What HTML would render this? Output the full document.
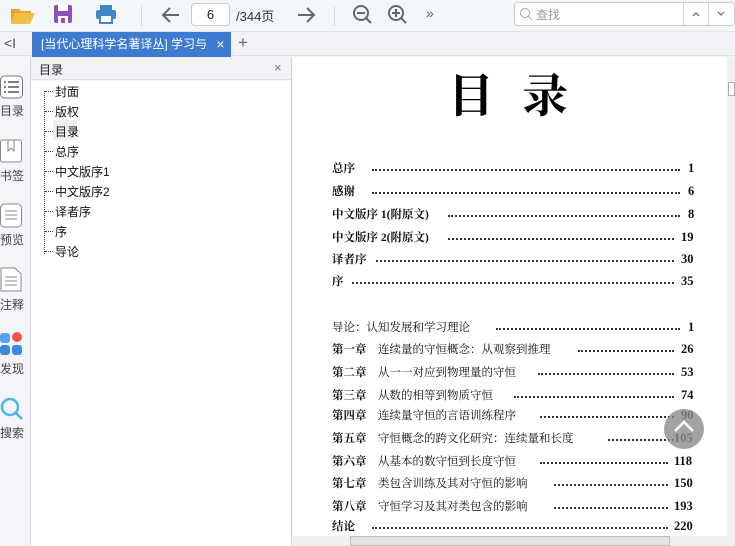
<!DOCTYPE html>
<html><head><meta charset="utf-8"><style>
*{margin:0;padding:0;box-sizing:border-box}
body{width:735px;height:546px;overflow:hidden;background:#f3f5f8;font-family:"Liberation Sans","Noto Sans CJK SC",sans-serif;position:relative;font-size:12px;color:#222}
.a{position:absolute}
.toc{position:absolute;left:332px;font-family:"Liberation Serif","Noto Serif CJK SC",serif;font-size:11.5px;font-weight:bold;color:#111;white-space:nowrap}
.dots{position:absolute;border-bottom:2px dotted #333;height:0}
.pn{position:absolute;font-family:"Liberation Serif",serif;font-weight:bold;font-size:12.5px;color:#111}
.side{position:absolute;left:0;width:31px;text-align:center;font-size:12px;color:#444}
.tree{position:absolute;left:55px;font-size:12px;color:#111}
</style></head><body>
<!-- toolbar -->
<div class="a" style="left:0;top:0;width:735px;height:32px;background:#f4f7fa;border-bottom:1px solid #e0e3e8"></div>
<svg class="a" style="left:10px;top:5px" width="26" height="20"><path d="M1 4h8l2 2h10v3H6L1 18z" fill="#e5a630"/><path d="M5 8h20l-5 11H1z" fill="#f2be46"/></svg>
<svg class="a" style="left:53px;top:4px" width="20" height="20"><rect x="1" y="1" width="18" height="18" rx="2" fill="#8b55b8"/><rect x="5" y="1" width="10" height="6" fill="#fff"/><rect x="5" y="12" width="10" height="7" fill="#fff"/><rect x="8" y="14" width="4" height="5" fill="#8b55b8"/></svg>
<svg class="a" style="left:95px;top:4px" width="22" height="20"><rect x="5" y="1" width="12" height="5" fill="#3f88c5"/><rect x="1" y="6" width="20" height="9" rx="2" fill="#3f88c5"/><rect x="5" y="11" width="12" height="8" fill="#fff" stroke="#3f88c5" stroke-width="2"/></svg>
<div class="a" style="left:141px;top:6px;width:1px;height:20px;background:#d5d8dd"></div>
<svg class="a" style="left:160px;top:5px" width="22" height="20"><path d="M19 10H3M10 3L3 10l7 7" stroke="#666" stroke-width="2" fill="none"/></svg>
<div class="a" style="left:191px;top:3px;width:39px;height:23px;border:1px solid #c8ccd2;border-radius:4px;background:#fff;text-align:center;line-height:21px;font-size:13px">6</div>
<div class="a" style="left:236px;top:6px;font-size:13px;color:#333">/344页</div>
<svg class="a" style="left:295px;top:5px" width="22" height="20"><path d="M3 10h16M12 3l7 7-7 7" stroke="#666" stroke-width="2" fill="none"/></svg>
<div class="a" style="left:334px;top:6px;width:1px;height:20px;background:#d5d8dd"></div>
<svg class="a" style="left:352px;top:4px" width="22" height="22"><circle cx="9" cy="9" r="7" stroke="#666" stroke-width="2" fill="none"/><path d="M5 9h8M14 14l5 5" stroke="#666" stroke-width="2"/></svg>
<svg class="a" style="left:387px;top:4px" width="22" height="22"><circle cx="9" cy="9" r="7" stroke="#666" stroke-width="2" fill="none"/><path d="M5 9h8M9 5v8M14 14l5 5" stroke="#666" stroke-width="2"/></svg>
<div class="a" style="left:426px;top:5px;font-size:14px;color:#666">»</div>
<div class="a" style="left:514px;top:2px;width:221px;height:24px;border:1px solid #c8ccd2;border-radius:4px;background:#fff"></div>
<svg class="a" style="left:519px;top:7px" width="14" height="14"><circle cx="6" cy="6" r="4.5" stroke="#aaa" fill="none"/><path d="M9 9l4 4" stroke="#aaa"/></svg>
<div class="a" style="left:536px;top:6px;font-size:12px;color:#999">查找</div>
<div class="a" style="left:683px;top:3px;width:1px;height:22px;background:#d5d8dd"></div>
<div class="a" style="left:708px;top:3px;width:1px;height:22px;background:#d5d8dd"></div>
<svg class="a" style="left:691px;top:10px" width="10" height="8"><path d="M2 6l3-3 3 3" stroke="#555" fill="none"/></svg>
<svg class="a" style="left:716px;top:10px" width="10" height="8"><path d="M2 2l3 3 3-3" stroke="#555" fill="none"/></svg>
<!-- tab bar -->
<div class="a" style="left:0;top:32px;width:735px;height:24px;background:#f1f3f6;border-bottom:1px solid #dfe2e6"></div>
<div class="a" style="left:4px;top:35px;font-size:14px;color:#555">&lt;I</div>
<div class="a" style="left:32px;top:32px;width:199px;height:25px;background:#3d7bd0;color:#fff;font-size:12px;line-height:25px;padding-left:9px;white-space:nowrap;overflow:hidden">[当代心理科学名著译丛] 学习与</div>
<div class="a" style="left:210px;top:32px;width:21px;height:25px;background:#3d7bd0;color:#fff;font-size:14px;line-height:24px;text-align:center">×</div>
<div class="a" style="left:238px;top:33px;font-size:17px;color:#666">+</div>
<!-- left strip -->
<svg class="a" style="left:0;top:75px" width="24" height="25"><rect x="0.5" y="1" width="22" height="22" rx="4" stroke="#777" fill="#fff"/><path d="M4 7h2M8 7h11M4 12h2M8 12h11M4 17h2M8 17h11" stroke="#555" stroke-width="1.5"/></svg>
<div class="side" style="top:102px;width:24px">目录</div>
<svg class="a" style="left:0;top:139px" width="24" height="26"><rect x="0.5" y="1" width="21" height="22" rx="2" stroke="#888" fill="#fff"/><path d="M8 1v11l3-3 3 3V1" stroke="#888" fill="none"/></svg>
<div class="side" style="top:167px;width:24px">书签</div>
<svg class="a" style="left:0;top:203px" width="24" height="26"><rect x="0.5" y="1" width="21" height="23" rx="4" stroke="#888" fill="#fff"/><path d="M5 8h12M5 12h12M5 16h12" stroke="#888"/></svg>
<div class="side" style="top:231px;width:24px">预览</div>
<svg class="a" style="left:0;top:267px" width="24" height="26"><path d="M1 1h14l6 6v17H1z" stroke="#888" fill="#fff"/><path d="M5 10h12M5 14h12M5 18h12" stroke="#888"/></svg>
<div class="side" style="top:296px;width:24px">注释</div>
<svg class="a" style="left:0;top:331px" width="24" height="26"><rect x="0" y="2" width="10" height="10" rx="3" fill="#5c9ff2"/><circle cx="17" cy="6" r="5" fill="#f05252"/><rect x="0" y="14" width="10" height="10" rx="3" fill="#3d8ae6"/><rect x="12" y="14" width="10" height="10" rx="3" fill="#3d8ae6"/></svg>
<div class="side" style="top:360px;width:24px">发现</div>
<svg class="a" style="left:0;top:396px" width="24" height="26"><circle cx="10" cy="11" r="8" stroke="#4fb3e6" stroke-width="2.5" fill="none"/><path d="M16 17l6 6" stroke="#4fb3e6" stroke-width="2.5"/></svg>
<div class="side" style="top:424px;width:24px">搜索</div>
<!-- panel -->
<div class="a" style="left:30px;top:57px;width:1px;height:489px;background:#d3d6db"></div>
<div class="a" style="left:31px;top:57px;width:261px;height:23px;background:#f1f3f6;border-bottom:1px solid #dcdfe4"></div>
<div class="a" style="left:39px;top:61px;font-size:12px">目录</div>
<div class="a" style="left:274px;top:60px;font-size:13px;color:#777">×</div>
<div class="a" style="left:31px;top:81px;width:261px;height:465px;background:#fff"></div>
<div class="a" style="left:291px;top:57px;width:1px;height:489px;background:#d3d6db"></div>
<div class="a" style="left:44px;top:91px;height:163px;border-left:1px dotted #444"></div>
<div class="a" style="left:53px;top:120px;width:24px;height:20px;background:#eef0f3"></div>
<div class="tree" style="top:83px">封面</div><div class="tree" style="top:103px">版权</div><div class="tree" style="top:123px">目录</div><div class="tree" style="top:143px">总序</div><div class="tree" style="top:163px">中文版序1</div><div class="tree" style="top:183px">中文版序2</div><div class="tree" style="top:203px">译者序</div><div class="tree" style="top:223px">序</div><div class="tree" style="top:243px">导论</div>
<div class="a" style="left:45px;top:91px;width:8px;border-top:1px dotted #444"></div>
<div class="a" style="left:45px;top:111px;width:8px;border-top:1px dotted #444"></div>
<div class="a" style="left:45px;top:131px;width:8px;border-top:1px dotted #444"></div>
<div class="a" style="left:45px;top:151px;width:8px;border-top:1px dotted #444"></div>
<div class="a" style="left:45px;top:171px;width:8px;border-top:1px dotted #444"></div>
<div class="a" style="left:45px;top:191px;width:8px;border-top:1px dotted #444"></div>
<div class="a" style="left:45px;top:211px;width:8px;border-top:1px dotted #444"></div>
<div class="a" style="left:45px;top:231px;width:8px;border-top:1px dotted #444"></div>
<div class="a" style="left:45px;top:251px;width:8px;border-top:1px dotted #444"></div>
<!-- page -->
<div class="a" style="left:293px;top:57px;width:434px;height:479px;background:#fff"></div>
<div class="a" style="left:448px;top:60px;font-family:'Noto Serif CJK SC',serif;font-size:46px;font-weight:bold;color:#000;letter-spacing:28px">目录</div>
<div class="toc" style="top:160px">总序</div><div class="dots" style="left:372px;top:169px;width:308px"></div><div class="pn" style="left:688px;top:161px">1</div>
<div class="toc" style="top:183px">感谢</div><div class="dots" style="left:372px;top:192px;width:308px"></div><div class="pn" style="left:688px;top:184px">6</div>
<div class="toc" style="top:206px">中文版序 1(附原文)</div><div class="dots" style="left:448px;top:215px;width:232px"></div><div class="pn" style="left:688px;top:207px">8</div>
<div class="toc" style="top:229px">中文版序 2(附原文)</div><div class="dots" style="left:448px;top:238px;width:226px"></div><div class="pn" style="left:681px;top:230px">19</div>
<div class="toc" style="top:251px">译者序</div><div class="dots" style="left:376px;top:260px;width:298px"></div><div class="pn" style="left:681px;top:252px">30</div>
<div class="toc" style="top:273px">序</div><div class="dots" style="left:352px;top:282px;width:322px"></div><div class="pn" style="left:681px;top:274px">35</div>
<div class="toc" style="top:319px;font-weight:normal">导论：认知发展和学习理论</div><div class="dots" style="left:496px;top:328px;width:184px"></div><div class="pn" style="left:688px;top:320px">1</div>
<div class="toc" style="top:341px">第一章　<span style="font-weight:normal">连续量的守恒概念：从观察到推理</span></div><div class="dots" style="left:578px;top:350px;width:96px"></div><div class="pn" style="left:681px;top:342px">26</div>
<div class="toc" style="top:364px">第二章　<span style="font-weight:normal">从一一对应到物理量的守恒</span></div><div class="dots" style="left:538px;top:373px;width:136px"></div><div class="pn" style="left:681px;top:365px">53</div>
<div class="toc" style="top:387px">第三章　<span style="font-weight:normal">从数的相等到物质守恒</span></div><div class="dots" style="left:514px;top:396px;width:160px"></div><div class="pn" style="left:681px;top:388px">74</div>
<div class="toc" style="top:407px">第四章　<span style="font-weight:normal">连续量守恒的言语训练程序</span></div><div class="dots" style="left:540px;top:416px;width:134px"></div><div class="pn" style="left:681px;top:408px">90</div>
<div class="toc" style="top:430px">第五章　<span style="font-weight:normal">守恒概念的跨文化研究：连续量和长度</span></div><div class="dots" style="left:608px;top:439px;width:66px"></div><div class="pn" style="left:674px;top:431px">105</div>
<div class="toc" style="top:453px">第六章　<span style="font-weight:normal">从基本的数守恒到长度守恒</span></div><div class="dots" style="left:540px;top:462px;width:128px"></div><div class="pn" style="left:674px;top:454px">118</div>
<div class="toc" style="top:475px">第七章　<span style="font-weight:normal">类包含训练及其对守恒的影响</span></div><div class="dots" style="left:554px;top:484px;width:114px"></div><div class="pn" style="left:674px;top:476px">150</div>
<div class="toc" style="top:498px">第八章　<span style="font-weight:normal">守恒学习及其对类包含的影响</span></div><div class="dots" style="left:554px;top:507px;width:114px"></div><div class="pn" style="left:674px;top:499px">193</div>
<div class="toc" style="top:518px">结论</div><div class="dots" style="left:372px;top:527px;width:296px"></div><div class="pn" style="left:674px;top:519px">220</div>
<div class="a" style="left:664px;top:409px;width:40px;height:40px;border-radius:50%;background:rgba(140,140,140,.8)"></div>
<svg class="a" style="left:672px;top:418px" width="24" height="16"><path d="M3 13l9-9 9 9" stroke="#fff" stroke-width="2.5" fill="none"/></svg>
<!-- scrollbars -->
<div class="a" style="left:727px;top:57px;width:8px;height:479px;background:#f0f0f0"></div>
<div class="a" style="left:728px;top:82px;width:7px;height:14px;background:#fff;border:1px solid #aaa"></div>
<div class="a" style="left:293px;top:536px;width:442px;height:10px;background:#f0f0f0"></div>
<div class="a" style="left:350px;top:536px;width:320px;height:10px;background:#e4e4e4;border:1px solid #bbb"></div>
</body></html>
